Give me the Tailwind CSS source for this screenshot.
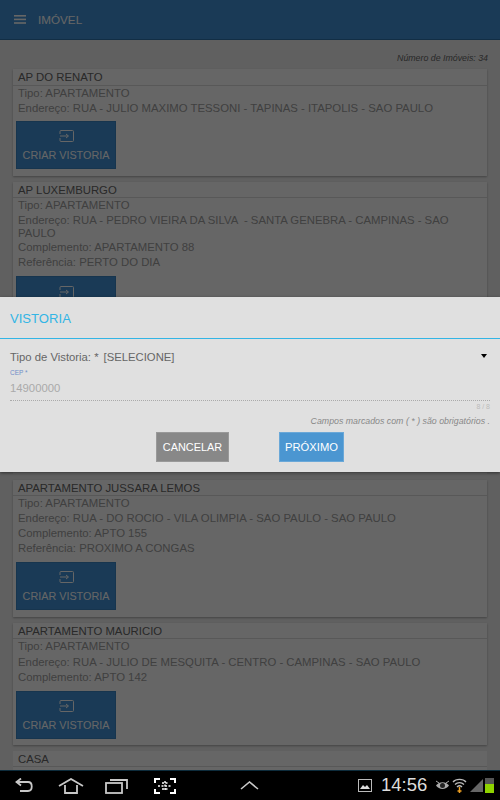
<!DOCTYPE html>
<html lang="pt">
<head>
  <meta charset="UTF-8" />
  <meta name="viewport" content="width=device-width, initial-scale=1.0"/>
  <title>Imóvel</title>
  <script src="https://cdn.jsdelivr.net/npm/@tailwindcss/browser@4"></script>
</head>
<body class="font-['Liberation_Sans',sans-serif]">
<div class="relative w-[500px] h-[800px] overflow-hidden flex flex-col bg-black">

  <!-- tela -->
  <div class="relative h-[770px] flex flex-col bg-[#f0f0f0] overflow-hidden">
    <header class="h-10 shrink-0 bg-[#4192d7] border-b border-[#2f74ad] flex items-center pl-[14px] gap-3 text-white">
      <svg width="12" height="9" viewBox="0 0 12 9" fill="#fff"><rect width="12" height="1.6" y="0"/><rect width="12" height="1.6" y="3.6"/><rect width="12" height="1.6" y="7.2"/></svg>
      <span class="text-[11.7px] pt-px">IMÓVEL</span>
    </header>

    <p class="shrink-0 text-right pr-3 pt-[13px] h-[29px] text-[8.8px] italic text-[#666] leading-[10px]">Número de Imóveis: 34</p>

    <div class="shrink-0 flex flex-col gap-[6px] px-[13px]">
      <!-- 1 -->
      <div class="bg-white shadow-[0_1px_2px_rgba(0,0,0,0.3)] h-[107px]">
        <h3 class="h-[17px] border-b border-[#ddd] pl-[5px] text-[11.35px] leading-[16px] text-[#666]">AP DO RENATO</h3>
        <div class="pl-[5px] text-[11.35px] leading-[15px] text-[#a0a0a0]">
          <p>Tipo: APARTAMENTO</p>
          <p>Endereço: RUA - JULIO MAXIMO TESSONI - TAPINAS - ITAPOLIS - SAO PAULO</p>
        </div>
        <button class="mt-[5px] ml-[3px] w-[100px] h-[48px] pt-[4px] bg-[#4192d7] text-white text-[10.8px] flex flex-col items-center justify-center gap-[5px] border border-[#3a85c4]">
          <svg width="15" height="12" viewBox="0 0 15 12" fill="none" stroke="#fff" stroke-width="1"><path d="M1 4V1.500A1 1 0 0 1 2 .5H13.500A1 1 0 0 1 14.500 1.500V10.500A1 1 0 0 1 13.500 11.500H2A1 1 0 0 1 1 10.500V8"/><path d="M1 6H9M7 4L9.500 6L7 8"/></svg>
          CRIAR VISTORIA
        </button>
      </div>
      <!-- 2: o diálogo cobre o rótulo do botão -->
      <div class="bg-white shadow-[0_1px_2px_rgba(0,0,0,0.3)] h-[148px]">
        <h3 class="h-4 border-b border-[#ddd] pl-[5px] text-[11.35px] leading-[16px] text-[#666]">AP LUXEMBURGO</h3>
        <div class="pl-[5px] pr-2 text-[11.35px] leading-[15px] text-[#a0a0a0]">
          <p>Tipo: APARTAMENTO</p>
          <p class="leading-[13px] mt-px">Endereço: RUA - PEDRO VIEIRA DA SILVA &nbsp;- SANTA GENEBRA - CAMPINAS - SAO PAULO</p>
          <p>Complemento: APARTAMENTO 88</p>
          <p>Referência: PERTO DO DIA</p>
        </div>
        <button class="mt-[6px] ml-[3px] w-[100px] h-[48px] pt-[9px] bg-[#4192d7] flex flex-col items-center border border-[#3a85c4]">
          <svg width="15" height="12" viewBox="0 0 15 12" fill="none" stroke="#fff" stroke-width="1"><path d="M1 4V1.500A1 1 0 0 1 2 .5H13.500A1 1 0 0 1 14.500 1.500V10.500A1 1 0 0 1 13.500 11.500H2A1 1 0 0 1 1 10.500V8"/><path d="M1 6H9M7 4L9.500 6L7 8"/></svg>
        </button>
      </div>
      <!-- atrás do diálogo -->
      <div class="bg-white h-[138px]"></div>
      <!-- 3 -->
      <div class="bg-white shadow-[0_1px_2px_rgba(0,0,0,0.3)] h-[137px]">
        <h3 class="h-4 border-b border-[#ddd] pl-[5px] text-[11.35px] leading-[16px] text-[#666]">APARTAMENTO JUSSARA LEMOS</h3>
        <div class="pl-[5px] text-[11.35px] leading-[15px] text-[#a0a0a0]">
          <p>Tipo: APARTAMENTO</p>
          <p>Endereço: RUA - DO ROCIO - VILA OLIMPIA - SAO PAULO - SAO PAULO</p>
          <p>Complemento: APTO 155</p>
          <p>Referência: PROXIMO A CONGAS</p>
        </div>
        <button class="mt-[6px] ml-[3px] w-[100px] h-[48px] pt-[4px] bg-[#4192d7] text-white text-[10.8px] flex flex-col items-center justify-center gap-[5px] border border-[#3a85c4]">
          <svg width="15" height="12" viewBox="0 0 15 12" fill="none" stroke="#fff" stroke-width="1"><path d="M1 4V1.500A1 1 0 0 1 2 .5H13.500A1 1 0 0 1 14.500 1.500V10.500A1 1 0 0 1 13.500 11.500H2A1 1 0 0 1 1 10.500V8"/><path d="M1 6H9M7 4L9.500 6L7 8"/></svg>
          CRIAR VISTORIA
        </button>
      </div>
      <!-- 4 -->
      <div class="bg-white shadow-[0_1px_2px_rgba(0,0,0,0.3)] h-[122px]">
        <h3 class="h-4 border-b border-[#ddd] pl-[5px] text-[11.35px] leading-[16px] text-[#666]">APARTAMENTO MAURICIO</h3>
        <div class="pl-[5px] text-[11.35px] leading-[15.5px] text-[#a0a0a0]">
          <p>Tipo: APARTAMENTO</p>
          <p>Endereço: RUA - JULIO DE MESQUITA - CENTRO - CAMPINAS - SAO PAULO</p>
          <p>Complemento: APTO 142</p>
        </div>
        <button class="mt-[5px] ml-[3px] w-[100px] h-[48px] pt-[4px] bg-[#4192d7] text-white text-[10.8px] flex flex-col items-center justify-center gap-[5px] border border-[#3a85c4]">
          <svg width="15" height="12" viewBox="0 0 15 12" fill="none" stroke="#fff" stroke-width="1"><path d="M1 4V1.500A1 1 0 0 1 2 .5H13.500A1 1 0 0 1 14.500 1.500V10.500A1 1 0 0 1 13.500 11.500H2A1 1 0 0 1 1 10.500V8"/><path d="M1 6H9M7 4L9.500 6L7 8"/></svg>
          CRIAR VISTORIA
        </button>
      </div>
      <!-- 5 -->
      <div class="bg-white h-[60px]">
        <h3 class="h-4 border-b border-[#ddd] pl-[5px] text-[11.35px] leading-[16px] text-[#666]">CASA</h3>
      </div>
    </div>

    <!-- escurecer -->
    <div class="absolute inset-0 bg-black/60"></div>

    <!-- diálogo -->
    <div class="absolute left-0 right-0 top-[297px] h-[175px] bg-[#e0e0e0] shadow-[0_1px_3px_rgba(0,0,0,0.5)]">
      <div class="h-[42px] border-b-[1px] border-[#33b5e5] pl-[10px] pt-[2px] flex items-center text-[13.1px] text-[#33b5e5]">VISTORIA</div>
      <div class="relative px-[10px] pt-[11px]">
        <div class="flex items-center h-[14px] text-[11.3px] text-[#666]">
          <span>Tipo de Vistoria: *</span>
          <span class="ml-[5px]">[SELECIONE]</span>
          <span class="ml-auto mr-[3px] mb-[2px] w-0 h-0 border-x-[3px] border-x-transparent border-t-[4px] border-t-black"></span>
        </div>
        <p class="mt-[5px] text-[6.500px] leading-[8px] text-[#6f8fc8]">CEP *</p>
        <p class="mt-[4px] text-[11.300px] leading-[14px] text-[#aaa]">14900000</p>
        <div class="mt-[5px] border-b border-dotted border-[#aaa]"></div>
        <p class="text-right text-[7px] leading-[10px] mt-[1px] text-[#bbb]">8 / 8</p>
        <p class="text-right text-[8.800px] leading-[10px] mt-[4px] italic text-[#888]">Campos marcados com ( * ) são obrigatórios .</p>
        <div class="mt-[6px] flex justify-center gap-[50px]">
          <button class="w-[73px] h-[30px] bg-[#888] border border-[#999] text-white text-[10.900px]">CANCELAR</button>
          <button class="w-[65px] h-[30px] bg-[#4b96d1] border border-[#6aa8d8] text-white text-[11.200px]">PRÓXIMO</button>
        </div>
      </div>
    </div>
  </div>

  <!-- barra do sistema -->
  <nav class="h-[30px] shrink-0 bg-black border-t border-[#0d2c3c] flex items-center text-[#ccc] relative">
    <svg class="ml-[15px]" width="20" height="16" viewBox="0 0 20 16" fill="none" stroke="#c8c8c8" stroke-width="1.800"><path d="M1 4H13C18 4 18 13 13 13H5"/><path d="M6 0.500L1.500 4L6 7.500" /></svg>
    <svg class="ml-[23px]" width="26" height="16" viewBox="0 0 26 16" fill="none" stroke="#c8c8c8" stroke-width="1.800"><path d="M1 8L13 1L25 8"/><path d="M7 7V15H19V7"/></svg>
    <svg class="ml-[21px]" width="23" height="16" viewBox="0 0 23 16" fill="none" stroke="#c8c8c8" stroke-width="1.800"><rect x="1" y="5" width="16" height="10"/><path d="M5 2H22V11"/></svg>
    <svg class="ml-[26px]" width="22" height="16" viewBox="0 0 22 16" fill="none" stroke="#fff" stroke-width="2"><path d="M1 5V1H6M16 1H21V5M1 11V15H6M16 15H21V11"/><path d="M4 8H18M11 3V13M8 5H14M8 11H14" stroke-width="1.400" stroke-dasharray="2 1.500"/></svg>
    <svg class="ml-[64px]" width="19" height="9" viewBox="0 0 19 9" fill="none" stroke="#c8c8c8" stroke-width="1.600"><path d="M1 8L9.500 1L18 8"/></svg>
    <svg class="ml-[99px]" width="14" height="13" viewBox="0 0 14 13"><rect x="0.500" y="0.500" width="13" height="12" fill="none" stroke="#bbb"/><path d="M2 10L5 6L7 8L9 6L12 10Z" fill="#ddd"/></svg>
    <span class="ml-[9px] w-[47px] text-[18.5px] leading-none text-[#ddd]">14:56</span>
    <svg class="ml-[7px]" width="15" height="11" viewBox="0 0 15 11"><path d="M1 5.500C4 1 11 1 14 5.500C11 10 4 10 1 5.500Z" fill="#aaa"/><circle cx="7.500" cy="5.500" r="2.500" fill="#222"/><path d="M1 1L4 3M14 1L11 3" stroke="#aaa"/></svg>
    <svg class="ml-[2px]" width="15" height="17" viewBox="0 0 15 17" fill="none"><path d="M1 5C4 1.500 11 1.500 14 5M3 7.500C5.500 5 9.500 5 12 7.500M5 10C6.500 8.500 8.500 8.500 10 10" stroke="#bbb" stroke-width="1.300"/><path d="M7.500 10V16M5.500 14H9.500" stroke="#f0a020" stroke-width="1.500"/></svg>
    <svg class="ml-[3px]" width="13" height="13" viewBox="0 0 13 13"><path d="M0 13L13 0V13Z" fill="#666"/></svg>
    <div class="ml-[2px] w-[9px] h-[15px] flex flex-col justify-end bg-[#555] relative"><div class="h-[9px] bg-[#8fd300]"></div></div>
  </nav>
</div>
</body>
</html>
